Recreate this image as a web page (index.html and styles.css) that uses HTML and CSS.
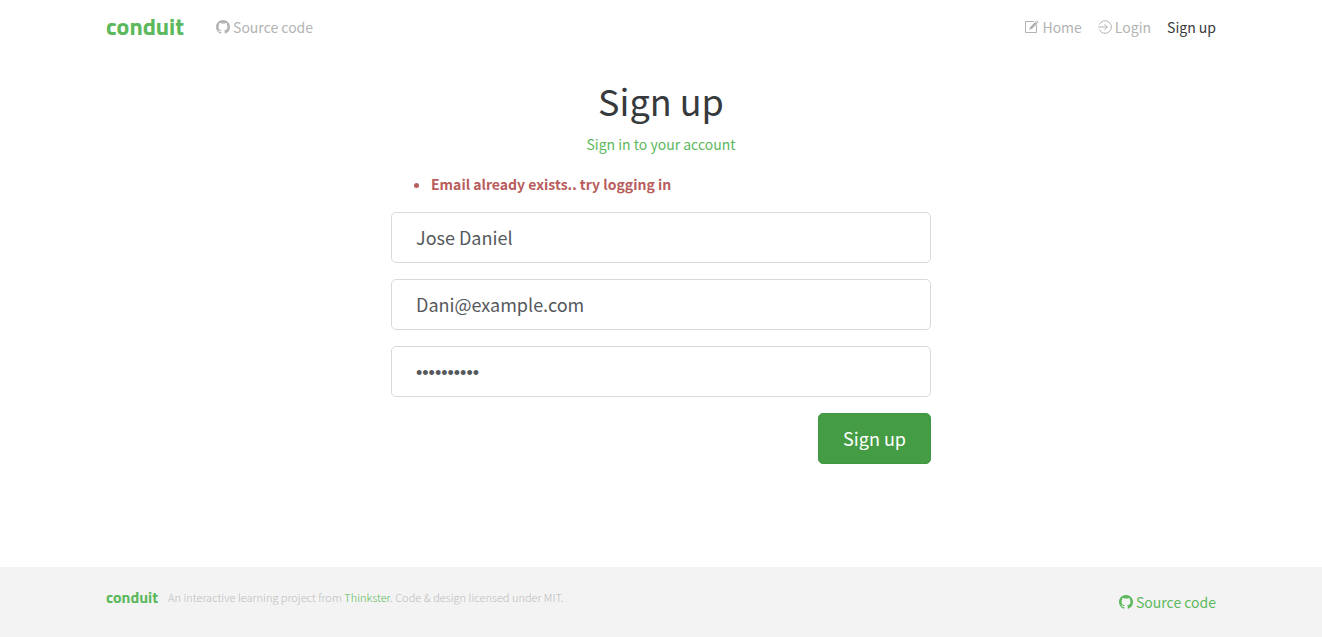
FILE: index.html
```html
<!DOCTYPE html>
<html lang="en">
<head>
<meta charset="utf-8">
<meta name="viewport" content="width=device-width, initial-scale=1">
<title>Conduit</title>
<link rel="stylesheet" href="styles.css">
</head>
<body>
<svg class="sprite" aria-hidden="true">
  <symbol id="github" viewBox="0 0 16 16">
    <path d="M8 0C3.58 0 0 3.58 0 8c0 3.54 2.29 6.53 5.47 7.59.4.07.55-.17.55-.38 0-.19-.01-.82-.01-1.49-2.01.37-2.53-.49-2.69-.94-.09-.23-.48-.94-.82-1.13-.28-.15-.68-.52-.01-.53.63-.01 1.08.58 1.23.82.72 1.21 1.87.87 2.33.66.07-.52.28-.87.51-1.07-1.78-.2-3.64-.89-3.64-3.95 0-.87.31-1.59.82-2.15-.08-.2-.36-1.02.08-2.12 0 0 .67-.21 2.2.82.64-.18 1.32-.27 2-.27s1.36.09 2 .27c1.53-1.04 2.2-.82 2.2-.82.44 1.1.16 1.92.08 2.12.51.56.82 1.27.82 2.15 0 3.07-1.87 3.75-3.65 3.95.29.25.54.73.54 1.48 0 1.07-.01 1.93-.01 2.2 0 .21.15.46.55.38A8.01 8.01 0 0 0 16 8c0-4.42-3.58-8-8-8z" fill="currentColor"/>
  </symbol>
  <symbol id="compose" viewBox="0 0 14 14">
    <path d="M9 1.5H.5v11h11V5" fill="none" stroke="currentColor"/>
    <path d="M4.2 9.8l.7-2.6 5.7-5.7 1.9 1.9-5.7 5.7zM11.1 1l.7-.7 1.900 1.900-.7.7z" fill="currentColor"/>
  </symbol>
  <symbol id="login" viewBox="0 0 14 14">
    <path d="M1.3 4.5a6.3 6.3 0 1 1 0 5M0 7h9.3M6.5 4.2L9.3 7 6.5 9.8" fill="none" stroke="currentColor"/>
  </symbol>
</svg>
<header>
  <nav class="container navbar">
    <a class="brand" href="#">conduit</a>
    <a class="nav-link" href="#"><svg class="icon"><use href="#github"/></svg>Source code</a>
    <ul class="nav-list">
      <li><a class="nav-link" href="#"><svg class="icon"><use href="#compose"/></svg>Home</a></li>
      <li><a class="nav-link" href="#"><svg class="icon"><use href="#login"/></svg>Login</a></li>
      <li><a class="nav-link active" href="#" aria-current="page">Sign up</a></li>
    </ul>
  </nav>
</header>
<main class="auth">
  <h1>Sign up</h1>
  <p class="switch"><a href="#">Sign in to your account</a></p>
  <ul class="errors" role="alert">
    <li>Email already exists.. try logging in</li>
  </ul>
  <form>
    <input class="field" type="text" aria-label="Your name" value="Jose Daniel">
    <input class="field" type="email" aria-label="Email" value="Dani@example.com">
    <input class="field password" type="password" aria-label="Password" value="abcdefghij">
    <button class="submit" type="submit">Sign up</button>
  </form>
</main>
<footer>
  <div class="container footer-row">
    <div class="footer-note">
      <a class="footer-brand" href="#">conduit</a>
      <span class="attribution">An interactive learning project from <a href="#">Thinkster</a>. Code &amp; design licensed under MIT.</span>
    </div>
    <a class="footer-source" href="#"><svg class="icon"><use href="#github"/></svg>Source code</a>
  </div>
</footer>
</body>
</html>
```

FILE: styles.css
```css
* {
  box-sizing: border-box;
}

body {
  margin: 0;
  min-height: 100vh;
  display: flex;
  flex-direction: column;
  background: #fff;
  color: #373a3c;
  font: 14px/24px "Source Sans Pro", "Noto Sans CJK SC", sans-serif;
}

a {
  color: #5cb85c;
  text-decoration: none;
}

.sprite {
  display: none;
}

.icon {
  width: 14px;
  height: 14px;
  flex: none;
}

.container {
  width: 100%;
  max-width: 1140px;
  margin: 0 auto;
  padding: 0 15px;
}

.navbar {
  display: flex;
  align-items: center;
  height: 54px;
}

.brand {
  margin-right: 32px;
  padding-bottom: 2px;
  font: bold 24px/36px "Titillium Web", "Noto Sans", sans-serif;
}

.nav-link,
.footer-source {
  display: flex;
  align-items: center;
  gap: 3px;
}

.nav-link {
  color: #b3b3b3;
}

.nav-link.active {
  color: #373a3c;
}

.nav-list {
  display: flex;
  gap: 16px;
  margin: 0 0 0 auto;
  padding: 0;
  list-style: none;
}

.auth {
  flex: 1;
  width: 100%;
  max-width: 570px;
  margin: 0 auto;
  padding: 24px 15px;
}

h1 {
  margin: 0 0 10px;
  font-size: 36px;
  font-weight: 400;
  line-height: 44px;
  text-align: center;
}

.switch {
  margin: 0 0 16px;
  text-align: center;
}

.errors {
  margin: 0 0 16px;
  padding-left: 40px;
  color: #b85c5c;
  font-weight: 700;
}

form {
  display: flex;
  flex-direction: column;
  gap: 16px;
}

.field,
.submit {
  height: 51px;
  padding: 0 24px 2px;
  border-radius: 5px;
  font: inherit;
  font-size: 18px;
}

.field {
  width: 100%;
  border: 1px solid #d9d9d9;
  background: #fff;
  color: #55595c;
}

.password {
  padding: 4px 24px 0;
  font-family: "Liberation Sans", sans-serif;
}

.submit {
  align-self: flex-end;
  border: 1px solid #419641;
  background: #449d44;
  color: #fff;
}

footer {
  background: #f3f3f3;
}

.footer-row {
  display: flex;
  align-items: center;
  justify-content: space-between;
  height: 70px;
}

.footer-note {
  display: flex;
  align-items: center;
  gap: 10px;
  padding-bottom: 10px;
}

.footer-brand {
  font: bold 16px/24px "Titillium Web", "Noto Sans", sans-serif;
}

.attribution {
  color: #bbb;
  font-size: 11px;
  font-weight: 300;
}
```
